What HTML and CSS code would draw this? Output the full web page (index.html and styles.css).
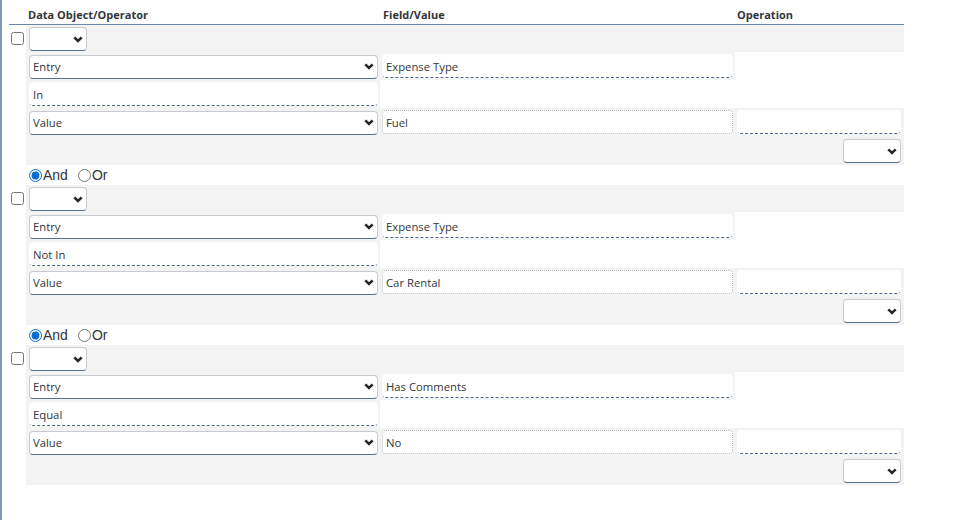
FILE: index.html
```html
<!DOCTYPE html>
<html>
<head>
<meta charset="utf-8">
<link rel="stylesheet" href="styles.css">
</head>
<body>
<div class="page">
  <div class="head">
    <div></div>
    <div class="hcell">Data Object/Operator</div>
    <div class="hcell h2">Field/Value</div>
    <div class="hcell">Operation</div>
  </div>

  <div class="group">
    <div class="chk"><input type="checkbox"></div>
    <div class="cell gray span3"><div class="selwrap small"><select class="sel"><option></option></select><svg class="chev" viewBox="0 0 10 7"><path d="M1.3 1.3 L5 5 L8.7 1.3"/></svg></div></div>
    <div class="chk"></div>
    <div class="cell gray c1"><div class="selwrap wide"><select class="sel"><option>Entry</option></select><svg class="chev" viewBox="0 0 10 7"><path d="M1.3 1.3 L5 5 L8.7 1.3"/></svg></div></div>
    <div class="cell gray c2"><input class="inp dash" value="Expense Type"></div>
    <div class="cell white"></div>
    <div class="chk"></div>
    <div class="cell gray c1"><input class="inp dash" value="In"></div>
    <div class="cell white round span2"></div>
    <div class="chk"></div>
    <div class="cell gray c1"><div class="selwrap wide"><select class="sel"><option>Value</option></select><svg class="chev" viewBox="0 0 10 7"><path d="M1.3 1.3 L5 5 L8.7 1.3"/></svg></div></div>
    <div class="cell gray c2"><input class="inp dot" value="Fuel"></div>
    <div class="cell gray c3"><input class="inp dash"></div>
    <div class="chk"></div>
    <div class="cell gray span3 right"><div class="selwrap small"><select class="sel"><option></option></select><svg class="chev" viewBox="0 0 10 7"><path d="M1.3 1.3 L5 5 L8.7 1.3"/></svg></div></div>
  </div>
  <div class="conj">
    <label class="opt"><input type="radio" name="j1" checked>And</label>
    <label class="opt"><input type="radio" name="j1">Or</label>
  </div>

  <div class="group">
    <div class="chk"><input type="checkbox"></div>
    <div class="cell gray span3"><div class="selwrap small"><select class="sel"><option></option></select><svg class="chev" viewBox="0 0 10 7"><path d="M1.3 1.3 L5 5 L8.7 1.3"/></svg></div></div>
    <div class="chk"></div>
    <div class="cell gray c1"><div class="selwrap wide"><select class="sel"><option>Entry</option></select><svg class="chev" viewBox="0 0 10 7"><path d="M1.3 1.3 L5 5 L8.7 1.3"/></svg></div></div>
    <div class="cell gray c2"><input class="inp dash" value="Expense Type"></div>
    <div class="cell white"></div>
    <div class="chk"></div>
    <div class="cell gray c1"><input class="inp dash" value="Not In"></div>
    <div class="cell white round span2"></div>
    <div class="chk"></div>
    <div class="cell gray c1"><div class="selwrap wide"><select class="sel"><option>Value</option></select><svg class="chev" viewBox="0 0 10 7"><path d="M1.3 1.3 L5 5 L8.7 1.3"/></svg></div></div>
    <div class="cell gray c2"><input class="inp dot" value="Car Rental"></div>
    <div class="cell gray c3"><input class="inp dash"></div>
    <div class="chk"></div>
    <div class="cell gray span3 right"><div class="selwrap small"><select class="sel"><option></option></select><svg class="chev" viewBox="0 0 10 7"><path d="M1.3 1.3 L5 5 L8.7 1.3"/></svg></div></div>
  </div>
  <div class="conj">
    <label class="opt"><input type="radio" name="j2" checked>And</label>
    <label class="opt"><input type="radio" name="j2">Or</label>
  </div>

  <div class="group">
    <div class="chk"><input type="checkbox"></div>
    <div class="cell gray span3"><div class="selwrap small"><select class="sel"><option></option></select><svg class="chev" viewBox="0 0 10 7"><path d="M1.3 1.3 L5 5 L8.7 1.3"/></svg></div></div>
    <div class="chk"></div>
    <div class="cell gray c1"><div class="selwrap wide"><select class="sel"><option>Entry</option></select><svg class="chev" viewBox="0 0 10 7"><path d="M1.3 1.3 L5 5 L8.7 1.3"/></svg></div></div>
    <div class="cell gray c2"><input class="inp dash" value="Has Comments"></div>
    <div class="cell white"></div>
    <div class="chk"></div>
    <div class="cell gray c1"><input class="inp dash" value="Equal"></div>
    <div class="cell white round span2"></div>
    <div class="chk"></div>
    <div class="cell gray c1"><div class="selwrap wide"><select class="sel"><option>Value</option></select><svg class="chev" viewBox="0 0 10 7"><path d="M1.3 1.3 L5 5 L8.7 1.3"/></svg></div></div>
    <div class="cell gray c2"><input class="inp dot" value="No"></div>
    <div class="cell gray c3"><input class="inp dash"></div>
    <div class="chk"></div>
    <div class="cell gray span3 right"><div class="selwrap small"><select class="sel"><option></option></select><svg class="chev" viewBox="0 0 10 7"><path d="M1.3 1.3 L5 5 L8.7 1.3"/></svg></div></div>
  </div>
</div>
</body>
</html>
```

FILE: styles.css
```css
html, body {
  margin: 0;
  padding: 0;
  background: #ffffff;
}
body {
  font-family: "Open Sans", "Liberation Sans", Arial, sans-serif;
  color: #32363a;
}
.page {
  box-sizing: border-box;
  min-height: 520px;
  border-left: 2px solid #8298b2;
  padding: 8px 0 0 7px;
}
.head {
  display: grid;
  grid-template-columns: 17px 354px 355px 169px;
  width: 895px;
  height: 16px;
  border-bottom: 1px solid #6d88a6;
}
.hcell {
  font-size: 11px;
  font-weight: bold;
  line-height: 14px;
  padding-left: 2px;
}
.hcell.h2 { padding-left: 3px; }

.group {
  display: grid;
  grid-template-columns: 17px 354px 355px 169px;
  grid-template-rows: 27px 28px 28px 28px 29px;
  width: 895px;
}
.chk {
  display: flex;
  align-items: center;
  justify-content: flex-start;
  padding-left: 2px;
}
.chk input {
  margin: 0;
  width: 13px;
  height: 13px;
}
.cell {
  display: flex;
  align-items: center;
  box-sizing: border-box;
}
.gray { background: #f3f3f3; }
.white { background: #ffffff; }
.round { border-top-left-radius: 4px; }
.span3 { grid-column: span 3; padding-left: 3px; }
.span2 { grid-column: span 2; }
.span3.right { justify-content: flex-end; padding-right: 3px; }
.c1 { padding: 0 2px 0 3px; }
.c2 { padding: 0 2px; }
.c3 { padding: 0 3px 0 2px; }

.selwrap {
  position: relative;
  height: 24px;
}
.selwrap.small { width: 58px; }
.selwrap.wide { width: 100%; }
.sel {
  -webkit-appearance: none;
  appearance: none;
  box-sizing: border-box;
  width: 100%;
  height: 24px;
  margin: 0;
  padding: 0 20px 0 3px;
  background: #ffffff;
  border: 1px solid #c7cbcf;
  border-bottom-color: #56718f;
  border-radius: 4px;
  font-family: "Open Sans", "Liberation Sans", Arial, sans-serif;
  font-size: 11.3px;
  color: #32363a;
}
.chev {
  position: absolute;
  right: 4px;
  top: 9px;
  width: 10px;
  height: 7px;
  fill: none;
  stroke: #25292d;
  stroke-width: 2.5;
  pointer-events: none;
}
.inp {
  box-sizing: border-box;
  width: 100%;
  height: 24px;
  margin: 0;
  padding: 0 3px;
  background: #ffffff;
  border: 1px solid transparent;
  border-radius: 4px;
  font-family: "Open Sans", "Liberation Sans", Arial, sans-serif;
  font-size: 11.3px;
  color: #32363a;
  outline: none;
}
.inp.dash {
  border-bottom: 1px dashed #4f6a88;
}
.inp.dot {
  border: 1px dotted #b9bcc0;
}

.conj {
  height: 20px;
  display: flex;
  align-items: center;
  padding-left: 20px;
  font-size: 14px;
  font-family: "Liberation Sans", Arial, sans-serif;
}
.opt {
  display: flex;
  align-items: center;
  margin-right: 10px;
  line-height: 16px;
}
.opt input {
  margin: 0 1px 0 0;
  width: 13px;
  height: 13px;
  accent-color: #0a6ed1;
}
```
